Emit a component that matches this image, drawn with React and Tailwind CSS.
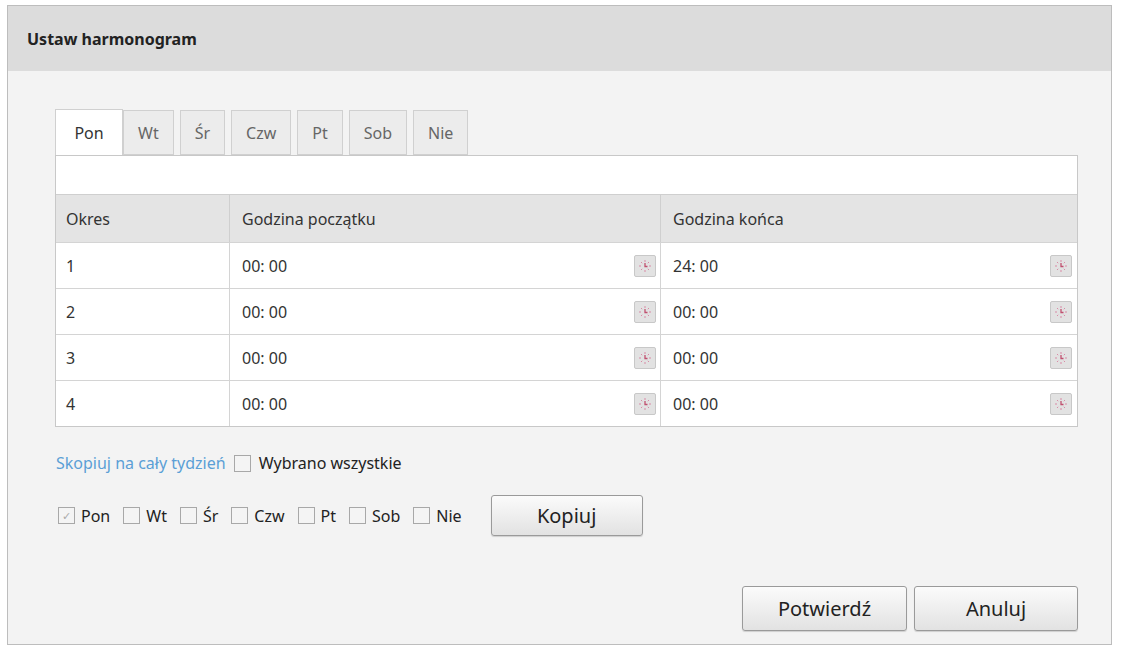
import React from 'react';

const days = ['Pon', 'Wt', 'Śr', 'Czw', 'Pt', 'Sob', 'Nie'];
const rows = [
  ['1', '00: 00', '24: 00'],
  ['2', '00: 00', '00: 00'],
  ['3', '00: 00', '00: 00'],
  ['4', '00: 00', '00: 00'],
];

const ClockIcon = () => (
  <span className="flex h-[22px] w-[22px] items-center justify-center rounded-[2px] border border-[#c8c8c8] bg-[#e2e2e2]">
    <svg width="16" height="16" viewBox="0 0 16 16" fill="none" stroke="#d98aa6" strokeWidth="1">
      <path d="M8 2v2M8 12v2M2 8h2M12 8h2M4 4l1.2 1.2M10.8 10.8L12 12M12 4l-1.2 1.2M4 12l1.2-1.2" />
      <path d="M8 5v3.5h2.5" stroke="#c0506f" strokeWidth="1.3" />
    </svg>
  </span>
);

const Check = ({ checked }) => (
  <span className="flex h-[17px] w-[17px] items-center justify-center border border-[#a8a8a8] bg-[#f4f4f4] text-[11px] leading-none text-[#aaa]">
    {checked ? '✓' : ''}
  </span>
);

const Btn = ({ children, className }) => (
  <button className={`rounded-[3px] border border-[#9a9a9a] bg-gradient-to-b from-[#fbfbfb] to-[#e2e2e2] text-[20px] text-[#222] shadow-[0_1px_1px_rgba(0,0,0,0.15)] ${className}`}>
    {children}
  </button>
);

export default function App() {
  return (
    <div className="h-[659px] w-[1129px] bg-white pl-[7px] pr-[17px] pt-[5px] pb-[14px] font-['Liberation_Sans']">
      <div className="flex h-full flex-col border border-[#bdbdbd] bg-[#f3f3f3]">
        <div className="flex h-[65px] items-center bg-[#dcdcdc] pl-[19px] text-[16px] font-bold text-[#222]">
          Ustaw harmonogram
        </div>
        <div className="pl-[47px] pr-[33px] pt-[38px]">
          <div className="flex items-end">
            {days.map((d, i) => (
              <div
                key={d}
                className={
                  i === 0
                    ? 'flex h-[46px] w-[68px] items-center justify-center border border-b-0 border-[#d0d0d0] bg-white text-[16px] text-[#333]'
                    : 'mr-[6px] flex h-[45px] items-center justify-center border border-[#d0d0d0] bg-[#ececec] px-[14px] text-[16px] text-[#666]'
                }
              >
                {d}
              </div>
            ))}
          </div>
          <div className="border border-[#c8c8c8] bg-white">
            <div className="h-[38px]" />
            <div className="grid grid-cols-[174px_431px_1fr] text-[16px] text-[#333]">
              <div className="flex h-[48px] items-center border-t border-r border-[#cfcfcf] bg-[#e4e4e4] pl-[10px]">Okres</div>
              <div className="flex h-[48px] items-center border-t border-r border-[#cfcfcf] bg-[#e4e4e4] pl-[12px]">Godzina początku</div>
              <div className="flex h-[48px] items-center border-t border-[#cfcfcf] bg-[#e4e4e4] pl-[12px]">Godzina końca</div>
              {rows.map(([n, a, b]) => (
                <React.Fragment key={n}>
                  <div className="flex h-[46px] items-center border-t border-r border-[#d4d4d4] pl-[10px]">{n}</div>
                  <div className="flex h-[46px] items-center justify-between border-t border-r border-[#d4d4d4] pl-[12px] pr-[4px]">
                    <span>{a}</span>
                    <ClockIcon />
                  </div>
                  <div className="flex h-[46px] items-center justify-between border-t border-[#d4d4d4] pl-[12px] pr-[5px]">
                    <span>{b}</span>
                    <ClockIcon />
                  </div>
                </React.Fragment>
              ))}
            </div>
          </div>
        </div>
        <div className="mt-[24px] flex items-center gap-[8px] pl-[48px] text-[16px]">
          <span className="text-[#5b9fd6]">Skopiuj na cały tydzień</span>
          <Check />
          <span className="text-[#222]">Wybrano wszystkie</span>
        </div>
        <div className="mt-[20px] flex items-center pl-[50px] text-[16px] text-[#222]">
          {days.map((d, i) => (
            <span key={d} className="mr-[13px] flex items-center gap-[6px]">
              <Check checked={i === 0} />
              {d}
            </span>
          ))}
          <Btn className="ml-[16px] h-[41px] w-[152px]">Kopiuj</Btn>
        </div>
        <div className="mt-[50px] flex justify-end gap-[7px] pr-[33px]">
          <Btn className="h-[45px] w-[165px]">Potwierdź</Btn>
          <Btn className="h-[45px] w-[164px]">Anuluj</Btn>
        </div>
      </div>
    </div>
  );
}
